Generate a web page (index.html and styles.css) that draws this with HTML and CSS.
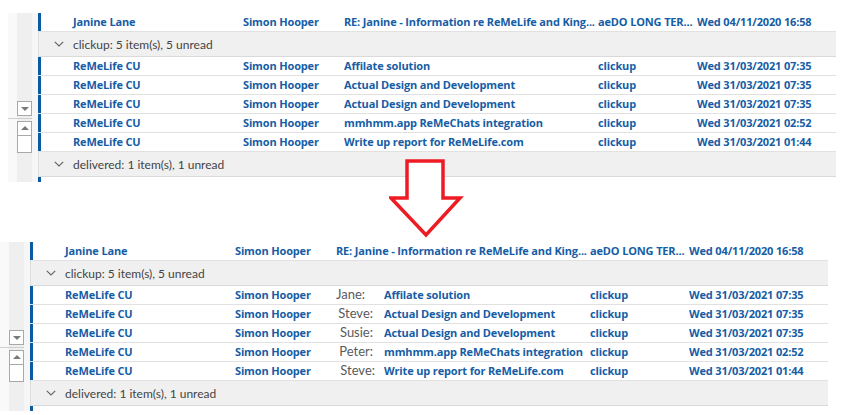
FILE: index.html
```html
<!DOCTYPE html>
<html>
<head>
<meta charset="utf-8">
<link rel="stylesheet" href="styles.css">
</head>
<body>
<div class="page">
  <section class="panel panel--top">
    <aside class="rail">
      <div class="sbtn"><span class="tri tri--down"></span></div>
      <div class="rail-sep"></div>
      <div class="sbtn"><span class="tri tri--up"></span></div>
      <div class="sbox"></div>
    </aside>
    <div class="list">
      <div class="row mail"><span class="bar"></span><span class="c from">Janine Lane</span><span class="c">Simon Hooper</span><span class="c">RE: Janine - Information re ReMeLife and King...</span><span class="c">aeDO LONG TER...</span><span class="c">Wed 04/11/2020 16:58</span></div>
      <div class="row group"><svg class="chev" width="10" height="6" viewBox="0 0 10 6"><path d="M0.8 0.8 L5 5 L9.2 0.8" fill="none" stroke="#666" stroke-width="1.2"/></svg><span>clickup: 5 item(s), 5 unread</span></div>
      <div class="row mail"><span class="bar"></span><span class="c from">ReMeLife CU</span><span class="c">Simon Hooper</span><span class="c">Affilate solution</span><span class="c">clickup</span><span class="c">Wed 31/03/2021 07:35</span></div>
      <div class="row mail"><span class="bar"></span><span class="c from">ReMeLife CU</span><span class="c">Simon Hooper</span><span class="c">Actual Design and Development</span><span class="c">clickup</span><span class="c">Wed 31/03/2021 07:35</span></div>
      <div class="row mail"><span class="bar"></span><span class="c from">ReMeLife CU</span><span class="c">Simon Hooper</span><span class="c">Actual Design and Development</span><span class="c">clickup</span><span class="c">Wed 31/03/2021 07:35</span></div>
      <div class="row mail"><span class="bar"></span><span class="c from">ReMeLife CU</span><span class="c">Simon Hooper</span><span class="c">mmhmm.app ReMeChats integration</span><span class="c">clickup</span><span class="c">Wed 31/03/2021 02:52</span></div>
      <div class="row mail"><span class="bar"></span><span class="c from">ReMeLife CU</span><span class="c">Simon Hooper</span><span class="c">Write up report for ReMeLife.com</span><span class="c">clickup</span><span class="c">Wed 31/03/2021 01:44</span></div>
      <div class="row group"><svg class="chev" width="10" height="6" viewBox="0 0 10 6"><path d="M0.8 0.8 L5 5 L9.2 0.8" fill="none" stroke="#666" stroke-width="1.2"/></svg><span>delivered: 1 item(s), 1 unread</span></div>
      <div class="row stub"><span class="bar"></span></div>
    </div>
  </section>

  <svg class="arrow" width="80" height="84" viewBox="389 158 80 84">
    <path d="M407 161 L443 161 L443 198 L460 198 L426 235 L391 198 L407 198 Z" fill="#fff" stroke="#ed1c24" stroke-width="3.5" stroke-linejoin="miter"/>
  </svg>

  <section class="panel panel--bottom">
    <aside class="rail">
      <div class="sbtn"><span class="tri tri--down"></span></div>
      <div class="rail-sep"></div>
      <div class="sbtn"><span class="tri tri--up"></span></div>
      <div class="sbox"></div>
    </aside>
    <div class="list">
      <div class="row mail"><span class="bar"></span><span class="c from">Janine Lane</span><span class="c">Simon Hooper</span><span class="c">RE: Janine - Information re ReMeLife and King...</span><span class="c">aeDO LONG TER...</span><span class="c">Wed 04/11/2020 16:58</span></div>
      <div class="row group"><svg class="chev" width="10" height="6" viewBox="0 0 10 6"><path d="M0.8 0.8 L5 5 L9.2 0.8" fill="none" stroke="#666" stroke-width="1.2"/></svg><span>clickup: 5 item(s), 5 unread</span></div>
      <div class="row mail"><span class="bar"></span><span class="c from">ReMeLife CU</span><span class="c">Simon Hooper</span><span class="c subj"><span class="who who--jane">Jane:</span><span>Affilate solution</span></span><span class="c">clickup</span><span class="c">Wed 31/03/2021 07:35</span></div>
      <div class="row mail"><span class="bar"></span><span class="c from">ReMeLife CU</span><span class="c">Simon Hooper</span><span class="c subj"><span class="who">Steve:</span><span>Actual Design and Development</span></span><span class="c">clickup</span><span class="c">Wed 31/03/2021 07:35</span></div>
      <div class="row mail"><span class="bar"></span><span class="c from">ReMeLife CU</span><span class="c">Simon Hooper</span><span class="c subj"><span class="who">Susie:</span><span>Actual Design and Development</span></span><span class="c">clickup</span><span class="c">Wed 31/03/2021 07:35</span></div>
      <div class="row mail"><span class="bar"></span><span class="c from">ReMeLife CU</span><span class="c">Simon Hooper</span><span class="c subj"><span class="who">Peter:</span><span>mmhmm.app ReMeChats integration</span></span><span class="c">clickup</span><span class="c">Wed 31/03/2021 02:52</span></div>
      <div class="row mail"><span class="bar"></span><span class="c from">ReMeLife CU</span><span class="c">Simon Hooper</span><span class="c subj"><span class="who who--last">Steve:</span><span>Write up report for ReMeLife.com</span></span><span class="c">clickup</span><span class="c">Wed 31/03/2021 01:44</span></div>
      <div class="row group"><svg class="chev" width="10" height="6" viewBox="0 0 10 6"><path d="M0.8 0.8 L5 5 L9.2 0.8" fill="none" stroke="#666" stroke-width="1.2"/></svg><span>delivered: 1 item(s), 1 unread</span></div>
      <div class="row stub"><span class="bar"></span></div>
    </div>
  </section>
</div>
</body>
</html>
```

FILE: styles.css
```css
* { box-sizing: border-box; }

html, body {
  margin: 0;
  padding: 0;
  background: #ffffff;
}

body {
  font-family: "Open Sans", "Noto Sans", "DejaVu Sans", sans-serif;
  font-size: 11px;
}

.page {
  position: relative;
  width: 843px;
  height: 415px;
  padding-top: 13px;
}

.panel {
  display: flex;
  width: 828px;
}

.panel--top { margin-left: 8px; }
.panel--bottom { margin-left: 0; margin-top: 60px; }

/* left rail with scroll buttons */
.rail {
  width: 30px;
  flex: none;
  display: flex;
  flex-direction: column;
  padding-top: 88px;
  background: linear-gradient(to right, #f9f9f9 0 9px, #efefef 9px 24px, #f6f6f6 24px 30px);
}

.sbtn, .sbox {
  margin-left: 9px;
  width: 15px;
  height: 15px;
  border: 1px solid #a8a8a8;
  background: #ffffff;
  display: flex;
  align-items: center;
  justify-content: center;
}

.sbox {
  height: 17px;
  border-top: none;
}

.rail-sep {
  width: 24px;
  height: 1px;
  background: #cfcfcf;
  margin: 2px 0 2px 0;
}

.tri {
  width: 0;
  height: 0;
  border-left: 4px solid transparent;
  border-right: 4px solid transparent;
}
.tri--down { border-top: 4px solid #7a7a7a; margin-top: 1px; }
.tri--up { border-bottom: 4px solid #7a7a7a; margin-bottom: 1px; }

/* message list */
.list {
  width: 798px;
  flex: none;
}

.row {
  border-bottom: 1px solid #e1e1e1;
}

.mail {
  display: grid;
  grid-template-columns: 3px 202px 101px 254px 99px 1fr;
  height: 19px;
  align-items: center;
  color: #165da5;
  font-weight: 700;
  letter-spacing: -0.15px;
  white-space: nowrap;
}

.bar {
  display: block;
  width: 3px;
  height: 18px;
  background: #0a5aa4;
  align-self: start;
}

.c {
  overflow: hidden;
  line-height: 18px;
}

.from { padding-left: 32px; }

.subj {
  display: flex;
  align-items: center;
}

.who {
  width: 40px;
  flex: none;
  text-align: right;
  padding-right: 3px;
  margin-right: 8px;
  color: #5a5a5a;
  font-family: "Lato", "Open Sans", sans-serif;
  font-weight: 400;
  font-size: 13px;
  letter-spacing: 0;
  position: relative;
  top: -1px;
}
.who--jane { padding-right: 11px; }
.who--last { padding-right: 1px; }

.group {
  display: flex;
  align-items: center;
  height: 25px;
  background: #f0f0f0;
  box-shadow: inset 1px 0 0 #dedede;
  border-bottom-color: #dadada;
  color: #444444;
  font-family: "Lato", "Open Sans", sans-serif;
  font-size: 12px;
  font-weight: 400;
}

.chev {
  margin-left: 16px;
  margin-right: 9px;
  display: block;
}

.stub {
  height: 5px;
  border-bottom: none;
}
.stub .bar { height: 5px; }

.arrow {
  position: absolute;
  left: 389px;
  top: 158px;
}
```
